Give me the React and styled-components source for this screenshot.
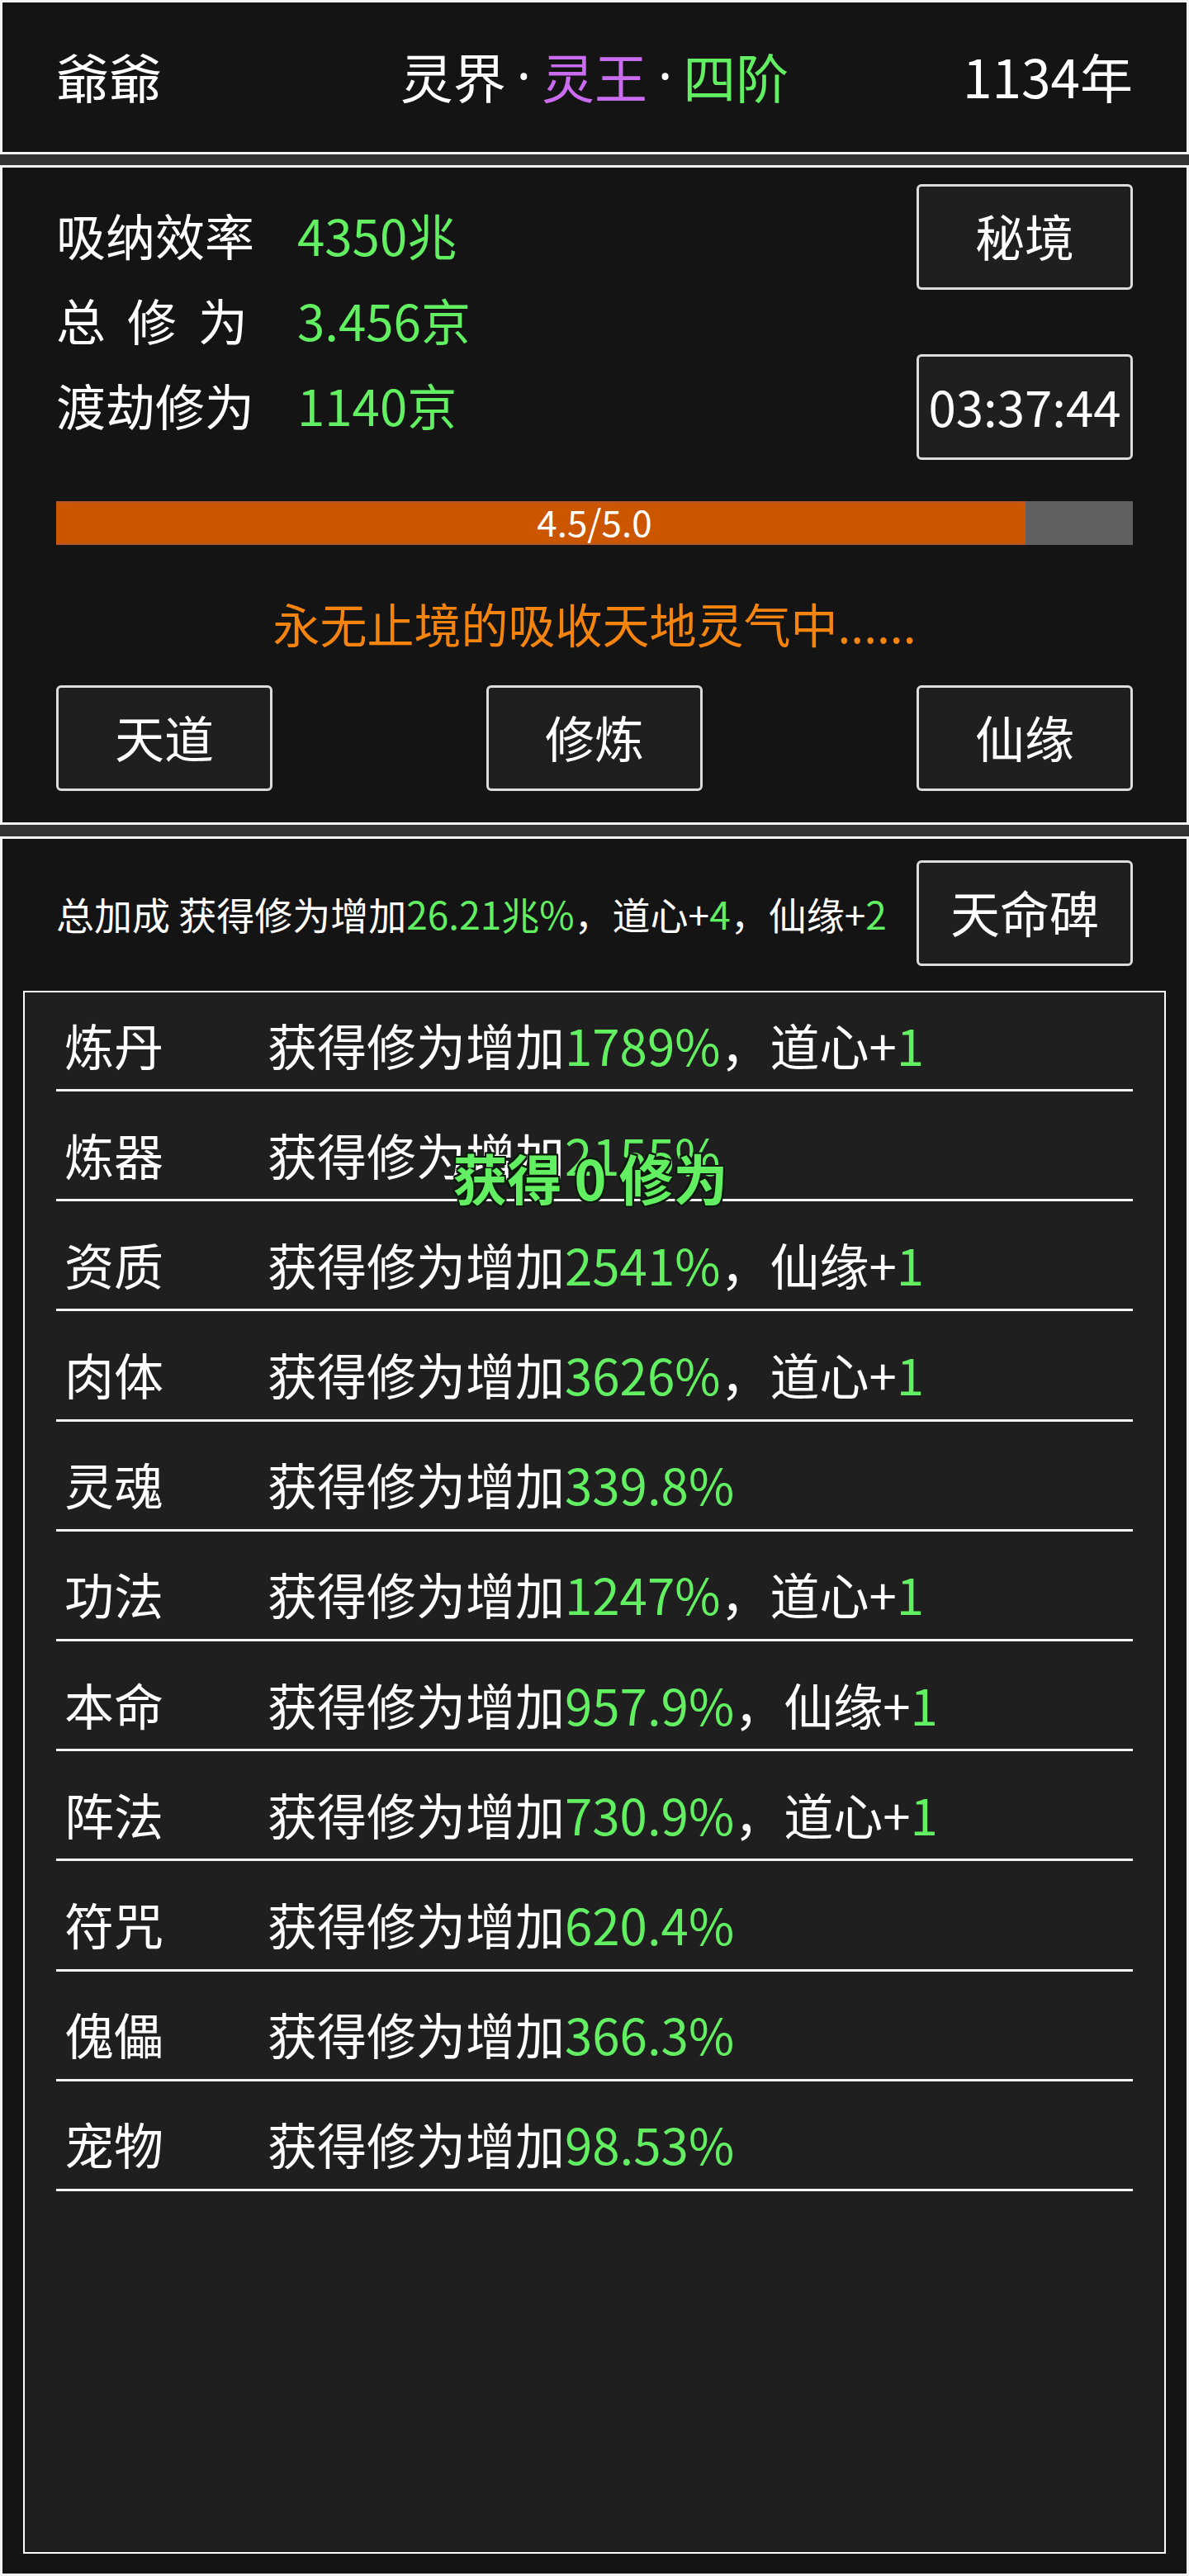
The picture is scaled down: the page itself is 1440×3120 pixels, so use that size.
import React from 'react'
import styled, { createGlobalStyle } from 'styled-components'

const GlobalStyle = createGlobalStyle`
  html, body {
    margin: 0;
    padding: 0;
    background: #343434;
  }
  body {
    font-family: "Noto Sans CJK SC", "Noto Sans", sans-serif;
    color: #fff;
  }
`

const GREEN = '#62f062'
const PURPLE = '#c96cf0'
const ORANGE = '#f5840f'

const stats = [
  { label: '吸纳效率', value: '4350兆' },
  { label: '总修为', value: '3.456京', spread: true },
  { label: '渡劫修为', value: '1140京' },
]

const bonuses = [
  { name: '炼丹', value: '1789%', extra: ['道心', '1'] },
  { name: '炼器', value: '2155%' },
  { name: '资质', value: '2541%', extra: ['仙缘', '1'] },
  { name: '肉体', value: '3626%', extra: ['道心', '1'] },
  { name: '灵魂', value: '339.8%' },
  { name: '功法', value: '1247%', extra: ['道心', '1'] },
  { name: '本命', value: '957.9%', extra: ['仙缘', '1'] },
  { name: '阵法', value: '730.9%', extra: ['道心', '1'] },
  { name: '符咒', value: '620.4%' },
  { name: '傀儡', value: '366.3%' },
  { name: '宠物', value: '98.53%' },
]

export default function App() {
  const progress = 4.5 / 5.0

  return (
    <Page>
      <GlobalStyle />
      <TopBar>
        <Name>爺爺</Name>
        <Realm>
          灵界<Dot>·</Dot><Colored color={PURPLE}>灵王</Colored><Dot>·</Dot><Colored color={GREEN}>四阶</Colored>
        </Realm>
        <Age>1134年</Age>
      </TopBar>

      <StatusBox>
        <StatsArea>
          <StatList>
            {stats.map(s => (
              <StatRow key={s.label}>
                <StatLabel spread={s.spread}>{s.label}</StatLabel>
                <Colored color={GREEN}>{s.value}</Colored>
              </StatRow>
            ))}
          </StatList>
          <SideButtons>
            <Btn>秘境</Btn>
            <Btn>03:37:44</Btn>
          </SideButtons>
        </StatsArea>

        <Bar>
          <BarFill style={{ width: `${progress * 100}%` }} />
          <BarText>4.5/5.0</BarText>
        </Bar>

        <Hint>永无止境的吸收天地灵气中......</Hint>

        <ActionRow>
          <Btn>天道</Btn>
          <Btn>修炼</Btn>
          <Btn>仙缘</Btn>
        </ActionRow>
      </StatusBox>

      <BonusBox>
        <SummaryRow>
          <Summary>
            总加成 获得修为增加<Colored color={GREEN}>26.21兆%</Colored>，道心+<Colored color={GREEN}>4</Colored>，仙缘+<Colored color={GREEN}>2</Colored>
          </Summary>
          <Btn>天命碑</Btn>
        </SummaryRow>

        <ListPanel>
          {bonuses.map(b => (
            <BonusRow key={b.name}>
              <BonusName>{b.name}</BonusName>
              <span>
                获得修为增加<Colored color={GREEN}>{b.value}</Colored>
                {b.extra && (
                  <>
                    ，{b.extra[0]}+<Colored color={GREEN}>{b.extra[1]}</Colored>
                  </>
                )}
              </span>
            </BonusRow>
          ))}
          <Toast>获得 0 修为</Toast>
        </ListPanel>
      </BonusBox>
    </Page>
  )
}

const Page = styled.div`
  width: 1440px;
  display: flex;
  flex-direction: column;
`
const Box = styled.section`
  box-sizing: border-box;
  border: 3px solid #f4f4f4;
  background: #141414;
`
const TopBar = styled(Box)`
  height: 187px;
  padding: 0 65px 6px;
  display: grid;
  grid-template-columns: 1fr auto 1fr;
  align-items: center;
  font-size: 64px;
  line-height: 1;
`
const Name = styled.div`
  justify-self: start;
`
const Realm = styled.div`
  display: flex;
  align-items: center;
  white-space: nowrap;
`
const Age = styled.div`
  justify-self: end;
`
const Dot = styled.span`
  font-family: "Noto Sans", sans-serif;
  margin: 0 13px;
`
const Colored = styled.span`
  color: ${p => p.color};
`
const StatusBox = styled(Box)`
  margin-top: 13px;
  height: 799px;
  padding: 20px 65px 38px;
  display: flex;
  flex-direction: column;
`
const StatsArea = styled.div`
  display: flex;
  justify-content: space-between;
`
const StatList = styled.div`
  padding-top: 9px;
  font-size: 60px;
  line-height: 1;
`
const StatRow = styled.div`
  height: 103px;
  display: flex;
  align-items: center;
`
const StatLabel = styled.span`
  width: 292px;
  letter-spacing: ${p => (p.spread ? '26px' : '0')};
`
const SideButtons = styled.div`
  display: flex;
  flex-direction: column;
  gap: 78px;
`
const Btn = styled.div`
  box-sizing: border-box;
  width: 262px;
  height: 128px;
  flex-shrink: 0;
  display: flex;
  align-items: center;
  justify-content: center;
  padding-bottom: 5px;
  border: 3px solid #dcdcdc;
  border-radius: 6px;
  background: #1f1f1f;
  font-size: 60px;
  line-height: 1;
  color: #fff;
`
const Bar = styled.div`
  position: relative;
  margin-top: 50px;
  height: 53px;
  background: #606060;
  display: flex;
  align-items: center;
  justify-content: center;
`
const BarFill = styled.div`
  position: absolute;
  left: 0;
  top: 0;
  bottom: 0;
  background: #cc5500;
  box-shadow: inset 0 2px 0 #b3582a, inset 0 -2px 0 #b3582a;
`
const BarText = styled.span`
  position: relative;
  top: -3px;
  font-size: 44px;
  line-height: 1;
`
const Hint = styled.div`
  margin-top: 55px;
  height: 80px;
  line-height: 78px;
  text-align: center;
  font-size: 57px;
  color: ${ORANGE};
`
const ActionRow = styled.div`
  margin-top: 35px;
  display: flex;
  justify-content: space-between;
`
const BonusBox = styled(Box)`
  margin-top: 14px;
  height: 2107px;
  padding: 26px 25px 24px;
  display: flex;
  flex-direction: column;
`
const SummaryRow = styled.div`
  padding: 0 40px;
  display: flex;
  align-items: center;
  justify-content: space-between;
`
const Summary = styled.div`
  font-size: 46px;
  line-height: 1;
  white-space: nowrap;
`
const ListPanel = styled.div`
  position: relative;
  margin-top: 30px;
  flex: 1;
  border: 2px solid #fafafa;
  background: #1f1f1f;
`
const BonusRow = styled.div`
  box-sizing: border-box;
  height: 120px;
  margin: 13.2px 38px 0;
  padding: 8px 0 0 10px;
  display: flex;
  align-items: center;
  border-bottom: 3px solid #f4f4f4;
  font-size: 60px;
  line-height: 1;
  white-space: nowrap;
  &:first-child {
    margin-top: 0;
  }
`
const BonusName = styled.span`
  width: 246px;
  flex-shrink: 0;
`
const Toast = styled.div`
  position: absolute;
  left: 0;
  right: 10px;
  top: 190px;
  text-align: center;
  font-size: 66px;
  font-weight: 700;
  line-height: 1;
  color: ${GREEN};
  text-shadow: 2px 0 #0c1a0c, -2px 0 #0c1a0c, 0 2px #0c1a0c, 0 -2px #0c1a0c,
    2px 2px #0c1a0c, -2px -2px #0c1a0c, 2px -2px #0c1a0c, -2px 2px #0c1a0c;
`
